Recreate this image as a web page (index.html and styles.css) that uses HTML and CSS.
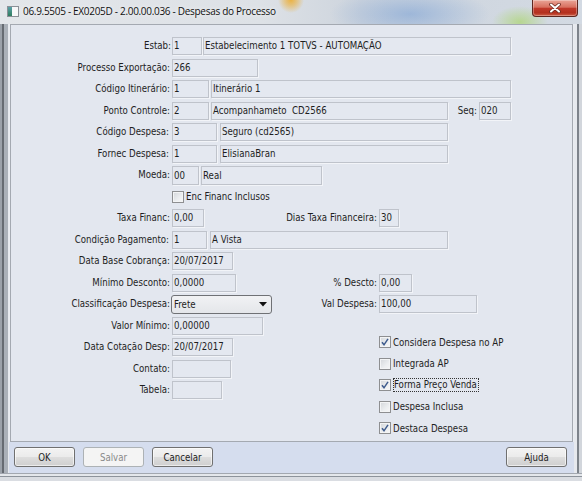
FILE: index.html
```html
<!DOCTYPE html>
<html lang="pt-BR">
<head>
<meta charset="utf-8">
<title>Despesas do Processo</title>
<link rel="stylesheet" href="styles.css">
</head>
<body>
<div class="window">
  <header class="titlebar">
    <svg class="app-icon" width="12" height="11" viewBox="0 0 12 11">
      <defs>
        <linearGradient id="ico" x1="0" y1="0" x2="0" y2="1">
          <stop offset="0" stop-color="#5aa0a8"/>
          <stop offset="1" stop-color="#2f7d5e"/>
        </linearGradient>
      </defs>
      <rect x="0.5" y="0.5" width="11" height="10" fill="#f7f8f9" stroke="#8b9097"/>
      <rect x="1" y="1" width="4" height="9" fill="url(#ico)"/>
    </svg>
    <span class="title">06.9.5505 - EX0205D - 2.00.00.036 - Despesas do Processo</span>
    <button class="close" type="button" aria-label="Fechar">
      <svg width="14" height="10" viewBox="0 0 14 10">
        <path d="M3 1.5 L11 8.5 M11 1.5 L3 8.5" stroke="#6b2a22" stroke-width="3.6" stroke-linecap="round"/>
        <path d="M3 1.5 L11 8.5 M11 1.5 L3 8.5" stroke="#ffffff" stroke-width="2" stroke-linecap="round"/>
      </svg>
    </button>
  </header>

  <div class="frame">
    <div class="edge-left"></div>
    <div class="client">
      <div class="panel">
        <div class="form">
          <div class="row g1">
            <span class="lbl">Estab:</span>
            <span class="fld w30">1</span>
            <span class="fld w308">Estabelecimento 1 TOTVS - AUTOMAÇÃO</span>
          </div>
          <div class="row">
            <span class="lbl">Processo Exportação:</span>
            <span class="fld w86">266</span>
          </div>
          <div class="row">
            <span class="lbl">Código Itinerário:</span>
            <span class="fld w37">1</span>
            <span class="fld w300">Itinerário 1</span>
          </div>
          <div class="row">
            <span class="lbl">Ponto Controle:</span>
            <span class="fld w37">2</span>
            <span class="fld w237 pre">Acompanhameto  CD2566</span>
            <span class="rlbl w27">Seq:</span>
            <span class="fld w32">020</span>
          </div>
          <div class="row g3">
            <span class="lbl">Código Despesa:</span>
            <span class="fld w45">3</span>
            <span class="fld w228">Seguro (cd2565)</span>
          </div>
          <div class="row g3">
            <span class="lbl">Fornec Despesa:</span>
            <span class="fld w45">1</span>
            <span class="fld w228">ElisianaBran</span>
          </div>
          <div class="row">
            <span class="lbl">Moeda:</span>
            <span class="fld w27 tall">00</span>
            <span class="fld w121 tall">Real</span>
          </div>
          <div class="row">
            <span class="lbl"></span>
            <label class="check">
              <span class="box"></span>
              <span>Enc Financ Inclusos</span>
            </label>
          </div>
          <div class="row">
            <div class="half">
              <span class="lbl">Taxa Financ:</span>
              <span class="fld w32">0,00</span>
              <span class="rlbl grow">Dias Taxa Financeira:</span>
            </div>
            <span class="fld w20">30</span>
          </div>
          <div class="row g3">
            <span class="lbl">Condição Pagamento:</span>
            <span class="fld w35">1</span>
            <span class="fld w238">A Vista</span>
          </div>
          <div class="row">
            <span class="lbl">Data Base Cobrança:</span>
            <span class="fld w61">20/07/2017</span>
          </div>
          <div class="row">
            <div class="half">
              <span class="lbl">Mínimo Desconto:</span>
              <span class="fld w64">0,0000</span>
              <span class="rlbl grow">% Descto:</span>
            </div>
            <span class="fld w33">0,00</span>
          </div>
          <div class="row">
            <div class="half">
              <span class="lbl">Classificação Despesa:</span>
              <span class="select">
                <span class="select-value">Frete</span>
                <svg class="caret" width="8" height="5" viewBox="0 0 8 5"><path d="M0 0 H8 L4 4.5 Z" fill="#111"/></svg>
              </span>
              <span class="rlbl grow">Val Despesa:</span>
            </div>
            <span class="fld w98">100,00</span>
          </div>

          <div class="bottom">
            <div class="bottom-left">
              <div class="row">
                <span class="lbl">Valor Mínimo:</span>
                <span class="fld w91">0,00000</span>
              </div>
              <div class="row">
                <span class="lbl">Data Cotação Desp:</span>
                <span class="fld w61">20/07/2017</span>
              </div>
              <div class="row">
                <span class="lbl">Contato:</span>
                <span class="fld w59"></span>
              </div>
              <div class="row">
                <span class="lbl">Tabela:</span>
                <span class="fld w50"></span>
              </div>
            </div>
            <div class="bottom-right">
              <label class="check">
                <span class="box"><svg width="10" height="10" viewBox="0 0 10 10"><path d="M2 5.2 L4 7.8 L8 1.8" fill="none" stroke="#3d5a8c" stroke-width="1.5"/></svg></span>
                <span>Considera Despesa no AP</span>
              </label>
              <label class="check">
                <span class="box"></span>
                <span>Integrada AP</span>
              </label>
              <label class="check">
                <span class="box"><svg width="10" height="10" viewBox="0 0 10 10"><path d="M2 5.2 L4 7.8 L8 1.8" fill="none" stroke="#3d5a8c" stroke-width="1.5"/></svg></span>
                <span class="focus">Forma Preço Venda</span>
              </label>
              <label class="check">
                <span class="box"></span>
                <span>Despesa Inclusa</span>
              </label>
              <label class="check">
                <span class="box"><svg width="10" height="10" viewBox="0 0 10 10"><path d="M2 5.2 L4 7.8 L8 1.8" fill="none" stroke="#3d5a8c" stroke-width="1.5"/></svg></span>
                <span>Destaca Despesa</span>
              </label>
            </div>
          </div>
        </div>
      </div>

      <div class="buttonbar">
        <button class="btn" type="button">OK</button>
        <button class="btn" type="button" disabled>Salvar</button>
        <button class="btn" type="button">Cancelar</button>
        <button class="btn help" type="button">Ajuda</button>
      </div>
    </div>
    <div class="edge-right"></div>
  </div>
  <div class="edge-bottom"></div>
</div>
</body>
</html>
```

FILE: styles.css
```css
* {
  box-sizing: border-box;
}

html,
body {
  margin: 0;
  padding: 0;
}

body {
  width: 582px;
  height: 481px;
  overflow: hidden;
  background: #c9ced6;
  font-family: "DejaVu Sans Condensed", "DejaVu Sans", sans-serif;
  font-size: 9.6px;
  color: #1e1e1e;
}

.window {
  width: 582px;
  height: 481px;
  display: flex;
  flex-direction: column;
}

/* ---- title bar (glass frame over a blurred desktop) ---- */
.titlebar {
  height: 24px;
  flex: none;
  display: flex;
  align-items: flex-start;
  background:
    radial-gradient(circle at 291px 0px, rgba(236, 176, 58, 0.95) 0, rgba(236, 176, 58, 0.55) 6px, rgba(236, 176, 58, 0) 13px),
    radial-gradient(ellipse 80px 26px at 410px 14px, rgba(118, 158, 212, 0.55), rgba(118, 158, 212, 0)),
    radial-gradient(ellipse 28px 16px at 520px 22px, rgba(176, 214, 124, 0.8), rgba(176, 214, 124, 0)),
    linear-gradient(to right, #e3e6ea 0, #dde1e6 45%, #cdd4dd 62%, #d3dae3 100%);
}

.app-icon {
  flex: none;
  margin: 6px 0 0 7px;
}

.title {
  margin: 4px 0 0 4px;
  font-family: "Open Sans", "Noto Sans", sans-serif;
  font-size: 10px;
  letter-spacing: -0.3px;
  line-height: 14px;
  color: #111;
  white-space: nowrap;
  text-shadow: 0 0 5px rgba(255, 255, 255, 0.9);
}

.close {
  flex: none;
  width: 46px;
  height: 17px;
  margin: 0 4px 0 auto;
  padding: 0;
  border: 1px solid #5e2720;
  border-top: none;
  border-radius: 0 0 4px 4px;
  background: linear-gradient(#eaa597 0, #d8705f 45%, #c0392a 52%, #b3301f 80%, #cf5f47 100%);
  box-shadow: inset 0 0 0 1px rgba(255, 255, 255, 0.3);
  display: flex;
  align-items: center;
  justify-content: center;
}

/* ---- window frame ---- */
.frame {
  flex: 1;
  display: flex;
  min-height: 0;
}

.edge-left {
  width: 9px;
  flex: none;
  background: linear-gradient(to right, #9ba1a9 0 2px, #666b72 2px 4px, #aab0b8 4px 8px, #e6e9ee 8px);
}

.edge-right {
  width: 8px;
  flex: none;
  background: linear-gradient(to right, #e6e9ee 0 3px, #7d838b 3px 5px, #d2d6dc 5px);
}

.edge-bottom {
  height: 8px;
  flex: none;
  background: linear-gradient(#a3a8b0 0 1px, #e4e7eb 1px 3px, #8d939b 3px 4px, #dadde2 4px);
}

.client {
  width: 565px;
  flex: none;
  display: flex;
  flex-direction: column;
  background: #e9ecf1;
}

/* ---- form panel ---- */
.panel {
  height: 418px;
  flex: none;
  margin: 0 1px;
  border: 1px solid #a4a9b1;
  background: #e3e7ef;
}

.form {
  padding-top: 12px;
  display: flex;
  flex-direction: column;
  row-gap: 3.5px;
}

.row {
  --g: 2px;
  display: flex;
  align-items: center;
  height: 18px;
  column-gap: var(--g);
  white-space: nowrap;
}

.row.g1 {
  --g: 1px;
}

.row.g3 {
  --g: 3px;
}

.lbl {
  flex: none;
  width: calc(161px - var(--g));
  text-align: right;
  line-height: 18px;
}

.rlbl {
  flex: none;
  text-align: right;
  line-height: 18px;
}

.rlbl.grow {
  flex: 1;
}

.half {
  --g: 2px;
  width: 366px;
  flex: none;
  display: flex;
  align-items: center;
  column-gap: var(--g);
}

.fld {
  flex: none;
  height: 18px;
  padding: 0 1px;
  border: 1px solid #bfc3cb;
  background: #e4e8f0;
  box-shadow: 1px 1px 0 rgba(255, 255, 255, 0.55);
  line-height: 16px;
  overflow: hidden;
  white-space: nowrap;
}

.fld.tall {
  height: 19px;
  line-height: 17px;
}

.pre {
  white-space: pre;
}

.w20 { width: 20px; }
.w27 { width: 27px; }
.w30 { width: 30px; }
.w32 { width: 32px; }
.w33 { width: 33px; }
.w35 { width: 35px; }
.w37 { width: 37px; }
.w45 { width: 45px; }
.w50 { width: 50px; }
.w59 { width: 59px; }
.w61 { width: 61px; }
.w64 { width: 64px; }
.w86 { width: 86px; }
.w91 { width: 91px; }
.w98 { width: 98px; }
.w121 { width: 121px; }
.w228 { width: 228px; }
.w237 { width: 237px; }
.w238 { width: 238px; }
.w300 { width: 300px; }
.w308 { width: 308px; }

/* combo box */
.select {
  flex: none;
  width: 101px;
  height: 19px;
  margin-left: -1px;
  margin-right: 1px;
  padding: 0 4px 0 2px;
  border: 1px solid #6f7175;
  border-radius: 3px;
  background: linear-gradient(#f1f2f4, #e4e6ea);
  display: flex;
  align-items: center;
  justify-content: space-between;
  line-height: 17px;
}

.caret {
  flex: none;
}

/* check boxes */
.check {
  display: flex;
  align-items: center;
  column-gap: 2px;
  height: 18px;
  white-space: nowrap;
}

.box {
  flex: none;
  width: 12px;
  height: 12px;
  border: 1px solid #8e8f91;
  background: linear-gradient(135deg, #d3d6da 0, #eceef0 60%, #f7f7f7 100%);
  box-shadow: inset 0 0 0 1px #f3f4f5;
  display: flex;
  align-items: center;
  justify-content: center;
}

.focus {
  height: 14px;
  line-height: 12px;
  padding: 0 1px 0 0;
  border: 1px dotted #333;
}

.bottom {
  display: flex;
}

.bottom-left {
  width: 368px;
  flex: none;
  display: flex;
  flex-direction: column;
  row-gap: 3.5px;
}

.bottom-right {
  padding-top: 16.5px;
  display: flex;
  flex-direction: column;
  row-gap: 3.5px;
}

/* ---- button bar ---- */
.buttonbar {
  flex: 1;
  display: flex;
  align-items: flex-start;
  column-gap: 8px;
  padding: 5px 7px 0 5px;
  background: #d5ddee;
}

.btn {
  width: 61px;
  height: 20px;
  padding: 0;
  border: 1px solid #707070;
  border-radius: 3px;
  background: linear-gradient(#f3f3f3 0, #ebebeb 48%, #dddddd 52%, #cfcfcf 100%);
  box-shadow: inset 0 0 0 1px rgba(255, 255, 255, 0.6);
  font: inherit;
  color: #1e1e1e;
}

.btn:disabled {
  border-color: #adb2b5;
  background: #f4f4f4;
  box-shadow: none;
  color: #8a8a8a;
}

.btn.help {
  margin-left: auto;
}
```
